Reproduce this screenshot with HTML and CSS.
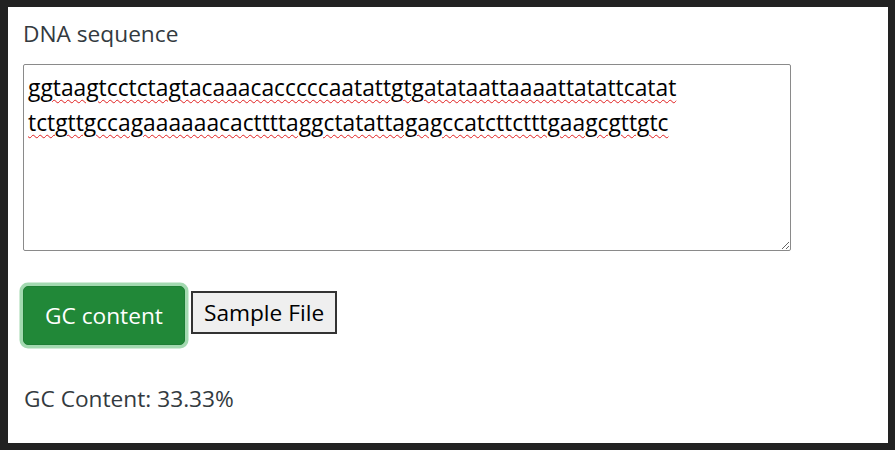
FILE: index.html
```html
<!DOCTYPE html>
<html>
<head>
<meta charset="utf-8">
<link rel="stylesheet" href="styles.css">
</head>
<body>
<main class="card">
  <label class="field-label" for="dna">DNA sequence</label>
  <textarea id="dna" class="dna-input" spellcheck="true">ggtaagtcctctagtacaaacacccccaatattgtgatataattaaaattatattcatat
tctgttgccagaaaaaacacttttaggctatattagagccatcttctttgaagcgttgtc</textarea>
  <div class="actions">
    <button class="btn-gc" type="button">GC content</button>
    <button class="btn-sample" type="button">Sample File</button>
  </div>
  <p class="result">GC Content: 33.33%</p>
</main>
</body>
</html>
```

FILE: styles.css
```css
html, body {
  margin: 0;
  padding: 0;
  background: #222222;
  height: 100%;
}
body {
  padding: 7px 7px 7px 8px;
  box-sizing: border-box;
  height: 450px;
  overflow: hidden;
}
.card {
  background: #ffffff;
  height: 436px;
  box-sizing: border-box;
  padding: 11px 16px 0 15px;
  font-family: "Open Sans", "Noto Sans", sans-serif;
  color: #212529;
}
.field-label {
  display: block;
  font-size: 22.7px;
  line-height: 31px;
  margin: 0 0 15px 0;
  color: #333a40;
}
.dna-input {
  display: block;
  box-sizing: border-box;
  width: 768px;
  height: 187px;
  margin: 0;
  padding: 5px 4px;
  border: 1px solid #8a8a8a;
  border-radius: 2px;
  font-family: "Open Sans", "Noto Sans", sans-serif;
  font-size: 22.8px;
  line-height: 35px;
  color: #000000;
  text-decoration: underline wavy #e02020;
  text-decoration-thickness: 1px;
  text-underline-offset: 3px;
  resize: both;
  outline: none;
}
.actions {
  display: flex;
  align-items: center;
  gap: 6px;
  margin-top: 35px;
}
.btn-gc {
  box-sizing: border-box;
  height: 59px;
  padding: 0 21px;
  font-family: "Open Sans", "Noto Sans", sans-serif;
  font-size: 22.7px;
  color: #ffffff;
  background: #218838;
  border: 1px solid #1e7e34;
  border-radius: 5px;
  box-shadow: 0 0 0 3.5px rgba(72, 180, 97, 0.5);
}
.btn-sample {
  box-sizing: border-box;
  height: 43px;
  padding: 0 11px;
  margin-top: -6px;
  font-family: "Open Sans", "Noto Sans", sans-serif;
  font-size: 22.7px;
  color: #000000;
  background: #efefef;
  border: 2px solid #333333;
  border-radius: 0;
}
.result {
  margin: 39px 0 0 1px;
  font-size: 22.7px;
  line-height: 30px;
  color: #333a40;
}
```
